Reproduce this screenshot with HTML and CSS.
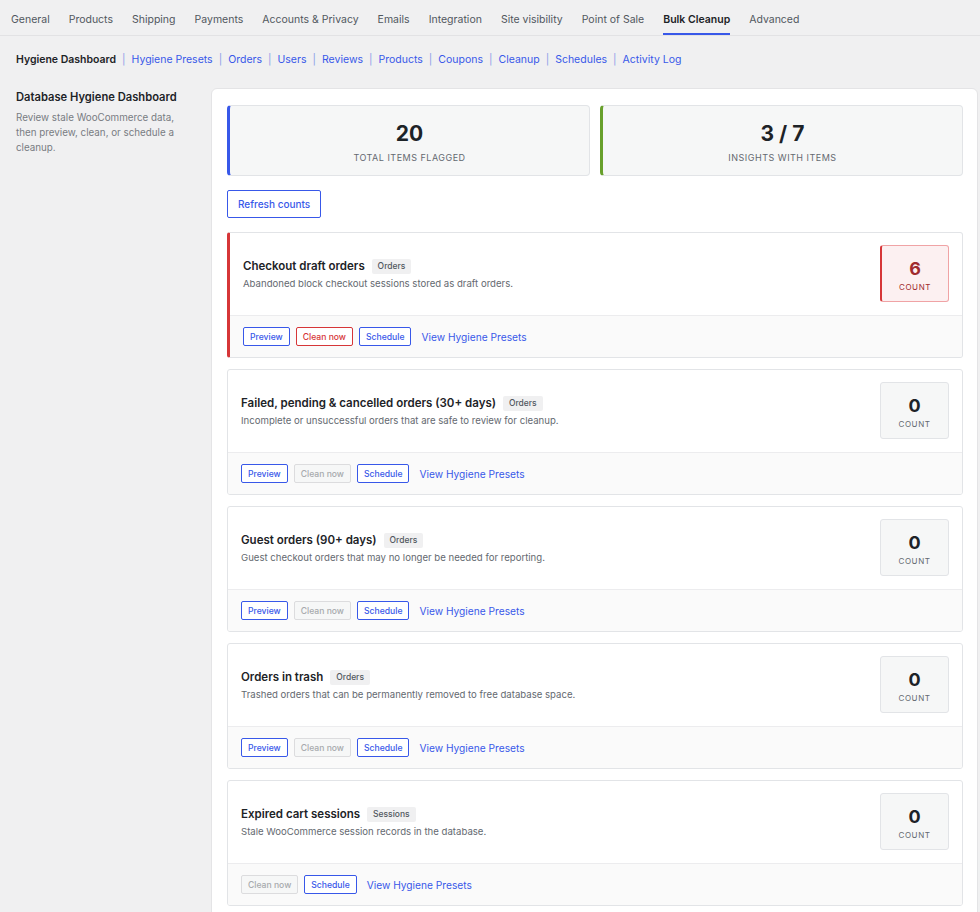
FILE: index.html
```
<!DOCTYPE html>
<html lang="en">
<head>
    <meta charset="UTF-8">
    <meta name="viewport" content="width=device-width, initial-scale=1.0">
    <title>Bulk Cleanup</title>
    <link rel="stylesheet" href="styles.css">
</head>
<body>
    <!-- Abas principais -->
    <nav class="tabs">
        <a class="tab">General</a>
        <a class="tab">Products</a>
        <a class="tab">Shipping</a>
        <a class="tab">Payments</a>
        <a class="tab">Accounts &amp; Privacy</a>
        <a class="tab">Emails</a>
        <a class="tab">Integration</a>
        <a class="tab">Site visibility</a>
        <a class="tab">Point of Sale</a>
        <a class="tab active">Bulk Cleanup</a>
        <a class="tab">Advanced</a>
    </nav>

    <!-- Sub navegação -->
    <ul class="subnav">
        <li class="current">Hygiene Dashboard</li>
        <li><a href="#">Hygiene Presets</a></li>
        <li><a href="#">Orders</a></li>
        <li><a href="#">Users</a></li>
        <li><a href="#">Reviews</a></li>
        <li><a href="#">Products</a></li>
        <li><a href="#">Coupons</a></li>
        <li><a href="#">Cleanup</a></li>
        <li><a href="#">Schedules</a></li>
        <li><a href="#">Activity Log</a></li>
    </ul>

    <div class="layout">
        <aside class="intro">
            <h2>Database Hygiene Dashboard</h2>
            <p>Review stale WooCommerce data, then preview, clean, or schedule a cleanup.</p>
        </aside>

        <main class="panel">
            <div class="stats">
                <div class="stat stat-blue">
                    <div class="stat-num">20</div>
                    <div class="stat-label">Total items flagged</div>
                </div>
                <div class="stat stat-green">
                    <div class="stat-num">3 / 7</div>
                    <div class="stat-label">Insights with items</div>
                </div>
            </div>

            <button class="btn btn-refresh">Refresh counts</button>

            <div class="insight flagged">
                <div class="insight-body">
                    <div class="insight-text">
                        <h3>Checkout draft orders <span class="badge">Orders</span></h3>
                        <p>Abandoned block checkout sessions stored as draft orders.</p>
                    </div>
                    <div class="count count-red">
                        <div class="count-num">6</div>
                        <div class="count-label">Count</div>
                    </div>
                </div>
                <div class="insight-actions">
                    <button class="btn">Preview</button>
                    <button class="btn btn-danger">Clean now</button>
                    <button class="btn">Schedule</button>
                    <a href="#" class="presets-link">View Hygiene Presets</a>
                </div>
            </div>

            <div class="insight">
                <div class="insight-body">
                    <div class="insight-text">
                        <h3>Failed, pending &amp; cancelled orders (30+ days) <span class="badge">Orders</span></h3>
                        <p>Incomplete or unsuccessful orders that are safe to review for cleanup.</p>
                    </div>
                    <div class="count">
                        <div class="count-num">0</div>
                        <div class="count-label">Count</div>
                    </div>
                </div>
                <div class="insight-actions">
                    <button class="btn">Preview</button>
                    <button class="btn btn-disabled">Clean now</button>
                    <button class="btn">Schedule</button>
                    <a href="#" class="presets-link">View Hygiene Presets</a>
                </div>
            </div>

            <div class="insight">
                <div class="insight-body">
                    <div class="insight-text">
                        <h3>Guest orders (90+ days) <span class="badge">Orders</span></h3>
                        <p>Guest checkout orders that may no longer be needed for reporting.</p>
                    </div>
                    <div class="count">
                        <div class="count-num">0</div>
                        <div class="count-label">Count</div>
                    </div>
                </div>
                <div class="insight-actions">
                    <button class="btn">Preview</button>
                    <button class="btn btn-disabled">Clean now</button>
                    <button class="btn">Schedule</button>
                    <a href="#" class="presets-link">View Hygiene Presets</a>
                </div>
            </div>

            <div class="insight">
                <div class="insight-body">
                    <div class="insight-text">
                        <h3>Orders in trash <span class="badge">Orders</span></h3>
                        <p>Trashed orders that can be permanently removed to free database space.</p>
                    </div>
                    <div class="count">
                        <div class="count-num">0</div>
                        <div class="count-label">Count</div>
                    </div>
                </div>
                <div class="insight-actions">
                    <button class="btn">Preview</button>
                    <button class="btn btn-disabled">Clean now</button>
                    <button class="btn">Schedule</button>
                    <a href="#" class="presets-link">View Hygiene Presets</a>
                </div>
            </div>

            <div class="insight">
                <div class="insight-body">
                    <div class="insight-text">
                        <h3>Expired cart sessions <span class="badge">Sessions</span></h3>
                        <p>Stale WooCommerce session records in the database.</p>
                    </div>
                    <div class="count">
                        <div class="count-num">0</div>
                        <div class="count-label">Count</div>
                    </div>
                </div>
                <div class="insight-actions">
                    <button class="btn btn-disabled">Clean now</button>
                    <button class="btn">Schedule</button>
                    <a href="#" class="presets-link">View Hygiene Presets</a>
                </div>
            </div>
        </main>
    </div>
</body>
</html>
```

FILE: styles.css
```
body {
    font-family: Inter, "Noto Sans", sans-serif;
    margin: 0;
    padding: 0;
    background-color: #f0f0f1;
    color: #1d2327;
}
a {
    color: #3858e9;
    text-decoration: none;
}
.tabs {
    display: flex;
    gap: 19px;
    padding: 0 11px;
    height: 35px;
    border-bottom: 1px solid #e2e2e4;
}
.tab {
    font-size: 10.5px;
    color: #50575e;
    line-height: 26px;
    padding-top: 7px;
    border-bottom: 2px solid transparent;
}
.tab.active {
    color: #1d2327;
    font-weight: 600;
    border-bottom-color: #3858e9;
}
.subnav {
    list-style: none;
    display: flex;
    margin: 0;
    padding: 17px 16px 0;
    font-size: 10.5px;
    line-height: 14px;
}
.subnav li + li::before {
    content: "|";
    color: #8c9ee8;
    margin: 0 6px;
}
.subnav .current {
    font-weight: 600;
    color: #1d2327;
}
.layout {
    display: grid;
    grid-template-columns: 180px 1fr;
    gap: 15px;
    padding: 21px 2px 0 16px;
}
.intro h2 {
    font-size: 11.2px;
    font-weight: 600;
    margin: 2px 0 6px;
    line-height: 14px;
}
.intro p {
    font-size: 9.8px;
    line-height: 15px;
    color: #787c82;
    margin: 0;
    max-width: 160px;
}
.panel {
    background-color: #fff;
    border: 1px solid #e4e4e6;
    border-radius: 6px;
    padding: 16px 14px 0 15px;
}
.stats {
    display: grid;
    grid-template-columns: 1fr 1fr;
    gap: 10px;
}
.stat {
    background-color: #f6f7f7;
    border: 1px solid #e2e4e7;
    border-radius: 4px;
    height: 71px;
    text-align: center;
    box-sizing: border-box;
    padding-top: 15px;
}
.stat-blue {
    border-left: 3px solid #3858e9;
}
.stat-green {
    border-left: 3px solid #68a02c;
}
.stat-num {
    font-size: 21px;
    font-weight: 700;
    line-height: 26px;
}
.stat-label {
    font-size: 9px;
    letter-spacing: 0.5px;
    text-transform: uppercase;
    color: #646970;
    margin-top: 5px;
}
.btn {
    font-family: inherit;
    font-size: 8.6px;
    font-weight: 500;
    color: #3858e9;
    background-color: #fff;
    border: 1px solid #3858e9;
    border-radius: 2px;
    height: 19px;
    padding: 0 6px;
    cursor: pointer;
}
.btn-refresh {
    font-size: 10px;
    height: 28px;
    padding: 0 10px;
    margin: 14px 0 14px;
    display: block;
}
.btn-danger {
    color: #d63638;
    border-color: #d63638;
}
.btn-disabled {
    color: #a7aaad;
    border-color: #dcdcde;
    background-color: #f6f7f7;
    cursor: default;
}
.insight {
    border: 1px solid #e2e4e7;
    border-radius: 3px;
    margin-bottom: 11px;
    overflow: hidden;
}
.insight.flagged {
    border-left: 3px solid #d63638;
}
.insight-body {
    display: flex;
    align-items: center;
    justify-content: space-between;
    padding: 12px 13px 13px 13px;
    border-bottom: 1px solid #ececee;
}
.insight-text h3 {
    font-size: 11.5px;
    font-weight: 600;
    margin: 0 0 4px;
    line-height: 16px;
}
.badge {
    display: inline-block;
    font-size: 8.5px;
    font-weight: 500;
    color: #50575e;
    background-color: #f0f0f1;
    border-radius: 2px;
    padding: 0 6px;
    line-height: 15px;
    margin-left: 4px;
    vertical-align: 1px;
}
.insight-text p {
    font-size: 9.6px;
    color: #646970;
    margin: 0;
}
.count {
    width: 69px;
    height: 57px;
    box-sizing: border-box;
    background-color: #f6f7f7;
    border: 1px solid #e2e4e7;
    border-radius: 3px;
    text-align: center;
    padding-top: 12px;
}
.count-red {
    background-color: #fcf0f1;
    border-color: #f0a3a5;
    border-left: 2px solid #d63638;
}
.count-num {
    font-size: 18px;
    font-weight: 700;
    line-height: 22px;
}
.count-red .count-num {
    color: #a02b2d;
}
.count-label {
    font-size: 8px;
    letter-spacing: 0.6px;
    text-transform: uppercase;
    color: #646970;
    margin-top: 2px;
}
.count-red .count-label {
    color: #a02b2d;
}
.insight-actions {
    display: flex;
    align-items: center;
    gap: 6px;
    background-color: #fafafa;
    padding: 11px 13px;
    height: 19px;
}
.presets-link {
    font-size: 10.2px;
    margin-left: 4px;
}
```
